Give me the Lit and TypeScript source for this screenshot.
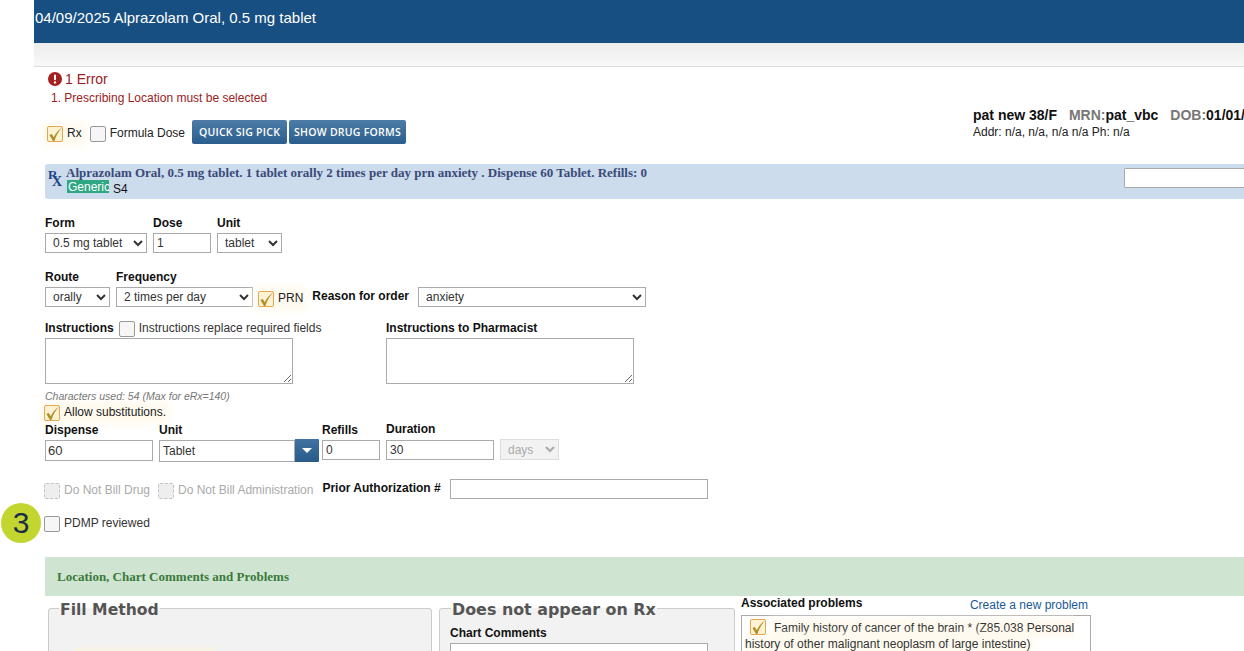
import { LitElement, html, css } from "lit";
import { customElement } from "lit/decorators.js";

const tick = html`<svg class="tick" viewBox="0 0 16 16" width="16" height="16"><path d="M2.4 9 L4.8 8 L6.8 11.2 C8.6 7.6 11 4.4 15 1.6 C11.6 5.4 9.2 9.6 7.4 15 L6 15 Z" fill="#b08f28"/></svg>`;

function box(kind: "on" | "off" | "dis") {
  return html`<span class="box ${kind}">${kind === "on" ? tick : ""}</span>`;
}

@customElement("app-root")
export class AppRoot extends LitElement {
  static styles = css`
    :host { display: block; position: relative; width: 1244px; height: 651px; overflow: hidden; background: #fff; font: 12px/14px "Liberation Sans", Arial, sans-serif; color: #222; }
    .page { margin-left: 34px; width: 1210px; }
    .hdr { height: 43px; background: #184f82; color: #fff; font-size: 15px; line-height: 36px; padding-left: 1px; white-space: nowrap; }
    .sub { height: 23px; background: linear-gradient(#ececec, #f8f8f8); border-bottom: 1px solid #dcdcdc; }
    .content { padding-left: 11px; }
    .top { display: flex; height: 77px; }
    .left { width: 928px; flex-shrink: 0; }
    .err { display: flex; align-items: center; gap: 3px; margin: 5px 0 0 3px; height: 14px; font-size: 14px; color: #9b2222; }
    .errline { margin: 6px 0 0 6px; font-size: 12px; line-height: 12px; color: #9b2222; }
    .rxrow { display: flex; align-items: flex-start; height: 24px; margin-top: 16px; }
    .patient { white-space: nowrap; padding-top: 40px; flex-shrink: 0; }
    .pn { font-size: 14px; font-weight: bold; line-height: 16px; color: #111; }
    .pn i { font-style: normal; color: #777; margin-left: 8px; }
    .addr { font-size: 12px; line-height: 13px; margin-top: 3px; color: #222; }
    .btn { height: 24px; box-sizing: border-box; background: linear-gradient(#4c7ca6, #2b5d8d); color: #fff; font: 600 10.5px/25px "Open Sans", sans-serif; letter-spacing: .25px; border-radius: 2px; text-align: center; white-space: nowrap; }
    .b1 { width: 95px; margin-left: 7px; }
    .b2 { width: 117px; margin-left: 2px; }
    .box { display: inline-block; box-sizing: border-box; width: 16px; height: 16px; border: 1px solid #999; border-radius: 2px; background: #f6f6f6; flex-shrink: 0; position: relative; }
    .box.on { border-color: #e2a84a; background: #fdf2d4; }
    .box.dis { border: 1px dashed #c4c4c4; background: #eee; }
    .tick { position: absolute; left: -1px; top: -1px; overflow: visible; }
    .chk { display: flex; align-items: flex-start; gap: 4px; white-space: nowrap; }
    .glow { background: #fffaf0; box-shadow: 0 0 7px 4px #fffaf0; }
    .rxc { margin: 6px 0 0 2px; }
    .fdc { margin: 6px 0 0 8px; }
    .banner { display: flex; justify-content: space-between; align-items: flex-start; height: 35px; background: #ccdcec; border-radius: 3px 0 0 3px; margin-top: 20px; }
    .rxi { font: bold 13px "Liberation Serif", serif; color: #1f4488; position: relative; width: 19px; height: 20px; margin: 7px 0 0 2px; flex-shrink: 0; }
    .rxi span { position: absolute; display: block; }
    .rxi .r { left: 1px; top: 0; line-height: 8px; }
    .rxi .x { left: 5px; top: 6px; line-height: 9px; font-size: 14px; }
    .bleft { display: flex; flex: 1; min-width: 0; }
    .btitle { font: bold 13px/14px "Liberation Serif", serif; color: #3b4a78; margin-top: 2px; white-space: nowrap; }
    .bsub { display: flex; height: 13px; margin-left: 1px; line-height: 14px; color: #111; font-size: 12px; }
    .gen { background: #2da882; color: #fff; padding: 0 1px; height: 13px; margin-right: 4px; width: 40px; overflow: hidden; }
    .s4 { padding-top: 2px; }
    .binput { width: 130px; height: 20px; box-sizing: border-box; background: #fff; border: 1px solid #aaa; margin: 4px -10px 0 0; border-radius: 1px; flex-shrink: 0; }
    .row { display: flex; align-items: flex-end; }
    .field { display: flex; flex-direction: column; gap: 3px; }
    b { font-weight: bold; color: #111; }
    select, input.t { box-sizing: border-box; height: 20px; border: 1px solid #aaa; background: #fff; font: 12px "Liberation Sans", Arial, sans-serif; color: #333; border-radius: 0; padding: 0 0 0 3px; margin: 0; display: block; }
    input.t { outline: none; }
    .r1 { margin-top: 17px; gap: 6px; }
    .r2 { margin-top: 17px; }
    .w-form { width: 102px; }
    .w-dose { width: 58px; }
    .w-unit { width: 65px; }
    .w-route { width: 65px; }
    .w-freq { width: 137px; }
    .fq { margin-left: 6px; }
    .w-reason { width: 228px; }
    .prn { margin: 0 0 0 5px; height: 16px; }
    .rlabel { margin: 0 9px 4px 9px; white-space: nowrap; }
    .r3 { display: flex; margin-top: 14px; align-items: flex-start; }
    .inst { width: 341px; }
    .instl { display: flex; align-items: flex-start; height: 16px; margin-bottom: 1px; white-space: nowrap; }
    .instl .box { margin: 0 4px 0 5px; }
    .g { color: #333; }
    textarea { display: block; box-sizing: border-box; width: 248px; height: 46px; border: 1px solid #aaa; margin: 0; padding: 0; background: #fff; border-radius: 0; }
    .used { font-size: 10.5px; font-style: italic; color: #777; line-height: 12px; margin-top: 6px; }
    .allow { margin: 3px 0 0 -1px; height: 16px; width: max-content; color: #222; }
    .r5 { margin-top: 2px; align-items: flex-start; }
    input.w-disp { width: 108px; height: 21px; font-size: 13px; padding-left: 2px; }
    .combo { display: flex; width: 160px; height: 22px; }
    .combo .in { flex: 1; box-sizing: border-box; border: 1px solid #aaa; background: #fff; color: #333; line-height: 20px; padding-left: 3px; }
    .combo .arrow { width: 24px; height: 23px; margin-top: -1px; background: linear-gradient(#3f72a0, #285a8a); display: flex; align-items: center; justify-content: center; border-radius: 0 1px 1px 0; }
    .arrow i { width: 0; height: 0; border: 5px solid transparent; border-top: 5px solid #fff; border-bottom: 0; }
    .uf { margin-left: 6px; }
    .w-ref { width: 58px; }
    .w-dur { width: 108px; }
    .fu { margin-left: 3px; }
    .fd { margin-left: 6px; margin-top: -1px; gap: 4px; }
    .fday { margin-left: 6px; padding-top: 16px; }
    .w-days { width: 59px; height: 21px; color: #aaa; background: #f2f2f2; border-color: #ddd; opacity: 1; }
    .r6 { display: flex; align-items: center; margin-top: 17px; height: 20px; }
    .r6 .chk { color: #aaa; margin-left: -1px; align-self: flex-end; height: 16px; }
    .r6 .c2 { margin-left: 8px; }
    .r6 b { margin: 0 9px 2px 9px; white-space: nowrap; }
    .w-prior { width: 258px; }
    .pdmp { margin: 17px 0 0 -1px; height: 16px; color: #333; }
    .green { box-sizing: border-box; height: 39px; background: #cfe5d2; margin-top: 25px; padding: 1px 0 0 12px; font: bold 13px/38px "Liberation Serif", serif; color: #3a7a3a; }
    .cols { display: flex; align-items: flex-start; }
    fieldset { margin: 0; box-sizing: border-box; border: 1px solid #ccc; border-radius: 3px 3px 0 0; background: #f2f2f2; height: 80px; padding: 0 10px; }
    legend { padding: 0 1px; margin: 0; font: bold 15.8px/18px "DejaVu Sans", sans-serif; color: #555; white-space: nowrap; position: relative; top: 2px; }
    .f1 { width: 384px; margin: 3px 0 0 3px; }
    .f1 legend { font-size: 15.6px; }
    .f2 { width: 296px; margin: 3px 0 0 7px; }
    .f2 legend { font-size: 15.9px; margin-left: 1px; }
    .fillglow { width: 140px; height: 10px; margin: 31px 0 0 16px; background: #f6f3e7; box-shadow: 0 0 3px 1px #f6f3e7; }
    .cc { margin-top: 9px; }
    .ccin { width: 258px; height: 30px; box-sizing: border-box; background: #fff; border: 1px solid #aaa; margin-top: 3px; }
    .assoc { margin: 0 0 0 6px; width: 350px; }
    .ah { display: flex; justify-content: space-between; padding: 0 3px 3px 0; height: 19px; line-height: 14px; align-items: flex-end; box-sizing: border-box; }
    .ah b { position: relative; top: -2px; }
    .ah a { color: #1a5a96; font-size: 12px; }
    .pbox { box-sizing: border-box; width: 350px; border: 1px solid #aaa; border-bottom: 0; padding: 4px 8px 8px 3px; height: 60px; color: #333; line-height: 16px; }
    .pbox .box { vertical-align: -4px; top: -1px; margin: 0 8px 0 5px; }
    .pbox span.t { background: #fffaf0; box-shadow: 0 0 6px 3px #fffaf0; }
    .badge { position: absolute; left: 1px; top: 503px; width: 40px; height: 40px; border-radius: 50%; background: #c3d630; color: #1b2c4a; font: 30px/40px "Liberation Sans", sans-serif; text-align: center; }
  `;

  render() {
    return html`
      <div class="page">
        <div class="hdr">04/09/2025 Alprazolam Oral, 0.5 mg tablet</div>
        <div class="sub"></div>
        <div class="content">
          <div class="top">
            <div class="left">
              <div class="err">
                <svg width="14" height="14" viewBox="0 0 14 14"><circle cx="7" cy="7" r="7" fill="#a51f1f"/><rect x="6" y="2.6" width="2" height="5.6" rx=".8" fill="#fff"/><circle cx="7" cy="10.4" r="1.2" fill="#fff"/></svg>
                1 Error
              </div>
              <div class="errline">1. Prescribing Location must be selected</div>
              <div class="rxrow">
                <span class="chk rxc glow">${box("on")}Rx</span>
                <span class="chk fdc">${box("off")}Formula Dose</span>
                <div class="btn b1">QUICK SIG PICK</div>
                <div class="btn b2">SHOW DRUG FORMS</div>
              </div>
            </div>
            <div class="patient">
              <div class="pn">pat new 38/F <i>MRN:</i>pat_vbc <i>DOB:</i>01/01/</div>
              <div class="addr">Addr: n/a, n/a, n/a n/a Ph: n/a</div>
            </div>
          </div>

          <div class="banner">
            <div class="bleft">
              <div class="rxi"><span class="r">R</span><span class="x">X</span></div>
              <div>
                <div class="btitle">Alprazolam Oral, 0.5 mg tablet. 1 tablet orally 2 times per day prn anxiety . Dispense 60 Tablet. Refills: 0</div>
                <div class="bsub"><span class="gen">Generic</span><span class="s4">S4</span></div>
              </div>
            </div>
            <div class="binput"></div>
          </div>

          <div class="row r1">
            <div class="field"><b>Form</b><select class="w-form"><option>0.5 mg tablet</option></select></div>
            <div class="field"><b>Dose</b><input class="t w-dose" .value=${"1"} /></div>
            <div class="field"><b>Unit</b><select class="w-unit"><option>tablet</option></select></div>
          </div>

          <div class="row r2">
            <div class="field"><b>Route</b><select class="w-route"><option>orally</option></select></div>
            <div class="field fq"><b>Frequency</b><select class="w-freq"><option>2 times per day</option></select></div>
            <span class="chk prn glow">${box("on")}PRN</span>
            <b class="rlabel">Reason for order</b>
            <select class="w-reason"><option>anxiety</option></select>
          </div>

          <div class="r3">
            <div class="inst">
              <div class="instl"><b>Instructions</b>${box("off")}<span class="g">Instructions replace required fields</span></div>
              <textarea></textarea>
            </div>
            <div>
              <div class="instl"><b>Instructions to Pharmacist</b></div>
              <textarea></textarea>
            </div>
          </div>

          <div class="used">Characters used: 54 (Max for eRx=140)</div>
          <div class="chk allow glow">${box("on")}Allow substitutions.</div>

          <div class="row r5">
            <div class="field"><b>Dispense</b><input class="t w-disp" .value=${"60"} /></div>
            <div class="field uf"><b>Unit</b>
              <div class="combo"><div class="in">Tablet</div><div class="arrow"><i></i></div></div>
            </div>
            <div class="field fu"><b>Refills</b><input class="t w-ref" .value=${"0"} /></div>
            <div class="field fd"><b>Duration</b><input class="t w-dur" .value=${"30"} /></div>
            <div class="fday"><select class="w-days" disabled><option>days</option></select></div>
          </div>

          <div class="r6">
            <span class="chk">${box("dis")}Do Not Bill Drug</span>
            <span class="chk c2">${box("dis")}Do Not Bill Administration</span>
            <b>Prior Authorization #</b>
            <input class="t w-prior" />
          </div>

          <div class="chk pdmp">${box("off")}PDMP reviewed</div>

          <div class="green">Location, Chart Comments and Problems</div>

          <div class="cols">
            <fieldset class="f1"><legend>Fill Method</legend><div class="fillglow"></div></fieldset>
            <fieldset class="f2"><legend>Does not appear on Rx</legend>
              <div class="cc"><b>Chart Comments</b><div class="ccin"></div></div>
            </fieldset>
            <div class="assoc">
              <div class="ah"><b>Associated problems</b><a>Create a new problem</a></div>
              <div class="pbox">${box("on")}<span class="t">Family history of cancer of the brain * (Z85.038 Personal history of other malignant neoplasm of large intestine)</span></div>
            </div>
          </div>
        </div>
      </div>
      <div class="badge">3</div>
    `;
  }
}
